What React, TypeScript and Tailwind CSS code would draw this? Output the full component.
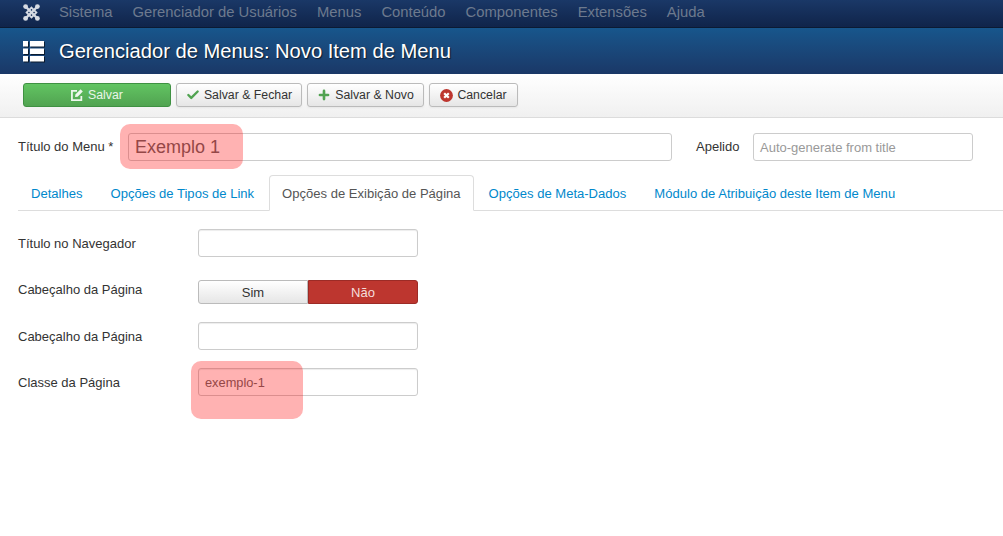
import { Check, Plus } from "lucide-react"

const font = "font-['Liberation_Sans',Arial,sans-serif]"

const navItems = ["Sistema", "Gerenciador de Usuários", "Menus", "Conteúdo", "Componentes", "Extensões", "Ajuda"]

const tabs = [
  { label: "Detalhes" },
  { label: "Opções de Tipos de Link" },
  { label: "Opções de Exibição de Página", active: true },
  { label: "Opções de Meta-Dados" },
  { label: "Módulo de Atribuição deste Item de Menu" },
]

function JoomlaLogo() {
  return (
    <svg width="17" height="17" viewBox="0 0 17 17" fill="none" className="ml-[23px] mr-[19px]">
      <g stroke="#d5dae2" strokeWidth="2.4">
        <path d="M2.5 2.5 L14.5 14.5" />
        <path d="M14.5 2.5 L2.5 14.5" />
        <path d="M8.5 3.6 L13.4 8.5 L8.5 13.4 L3.6 8.5 Z" strokeWidth="1.8" />
      </g>
      <circle cx="2.6" cy="2.6" r="2.4" fill="#d5dae2" />
      <circle cx="14.4" cy="2.6" r="2.4" fill="#d5dae2" />
      <circle cx="2.6" cy="14.4" r="2.4" fill="#d5dae2" />
      <circle cx="14.4" cy="14.4" r="2.4" fill="#d5dae2" />
    </svg>
  )
}

function ListIcon() {
  return (
    <svg width="21" height="21" viewBox="0 0 21 21" fill="#fff" className="drop-shadow-[1px_1px_0_rgba(0,0,0,0.6)]">
      <rect x="0" y="0" width="5" height="5.5" />
      <rect x="7" y="0" width="14" height="5.5" />
      <rect x="0" y="7.5" width="5" height="5.5" />
      <rect x="7" y="7.5" width="14" height="5.5" />
      <rect x="0" y="15" width="5" height="5.5" />
      <rect x="7" y="15" width="14" height="5.5" />
    </svg>
  )
}

function EditIcon() {
  return (
    <svg width="12" height="12" viewBox="0 0 13 13" fill="none" stroke="#eef8ee" strokeWidth="1.9">
      <path d="M11.2 7.5 V12 H1 V2 H6.5" />
      <path d="M4.4 8.8 L4.8 6 L10.4 0.4 L12.8 2.8 L7.2 8.4 Z" fill="#eef8ee" stroke="none" />
    </svg>
  )
}

function CancelIcon() {
  return (
    <svg width="13" height="13" viewBox="0 0 13 13">
      <circle cx="6.5" cy="6.5" r="6.4" fill="#bd362f" />
      <path d="M4.2 4.2 L8.8 8.8 M8.8 4.2 L4.2 8.8" stroke="#fff" strokeWidth="2.2" />
    </svg>
  )
}

function ToolbarButton({ children, className }: { children: React.ReactNode; className: string }) {
  return (
    <button className={`flex h-6 items-center justify-center gap-1 rounded-[3px] border border-[#bbb] bg-gradient-to-b from-white to-[#e6e6e6] text-[12.3px] text-[#333] shadow-[0_1px_2px_rgba(0,0,0,0.05)] ${className}`}>
      {children}
    </button>
  )
}

function Field({ label, className, children }: { label: string; className: string; children: React.ReactNode }) {
  return (
    <div className={`flex items-start ${className}`}>
      <label className="w-[180px] text-[13px] leading-[18px] text-[#333]">{label}</label>
      {children}
    </div>
  )
}

function TextBox({ value }: { value?: string }) {
  return (
    <div className="flex h-7 w-[220px] items-center rounded-[3px] border border-[#ccc] bg-white px-[6px] pt-[2px] text-[12.8px] text-[#666] shadow-[inset_0_1px_1px_rgba(0,0,0,0.075)]">
      {value}
    </div>
  )
}

export default function App() {
  return (
    <div className={`relative h-[536px] w-[1003px] overflow-hidden bg-white ${font}`}>
      {/* Top nav */}
      <div className="flex h-7 items-center border-b border-[#0b1a33] bg-gradient-to-b from-[#1a3867] to-[#10244a] pb-[3px]">
        <JoomlaLogo />
        <div className="flex gap-5 text-[14.8px] text-[#6d7a8e]">
          {navItems.map((item) => (
            <span key={item}>{item}</span>
          ))}
        </div>
      </div>

      {/* Title bar */}
      <div className="flex h-[46px] items-center gap-[15px] bg-gradient-to-b from-[#17568c] to-[#1a3867] pl-[23px]">
        <ListIcon />
        <h1 className="text-[20.15px] leading-none text-white [text-shadow:1px_1px_1px_rgba(0,0,0,0.6)]">
          Gerenciador de Menus: Novo Item de Menu
        </h1>
      </div>

      {/* Toolbar */}
      <div className="flex h-[44px] items-start gap-[5px] border-b border-[#dcdcdc] bg-gradient-to-b from-white to-[#f0f0f0] pl-[23px] pt-[9px]">
        <button className="flex h-6 w-[148px] items-center justify-center gap-[5px] rounded-[3px] border border-[#3f9142] bg-gradient-to-b from-[#62c462] to-[#51a351] text-[12.3px] text-[#e8f5e8]">
          <EditIcon />
          Salvar
        </button>
        <ToolbarButton className="w-[126px]">
          <Check size={14} strokeWidth={4} color="#51a351" />
          Salvar &amp; Fechar
        </ToolbarButton>
        <ToolbarButton className="w-[117px]">
          <Plus size={14} strokeWidth={4.5} color="#51a351" />
          Salvar &amp; Novo
        </ToolbarButton>
        <ToolbarButton className="w-[89px]">
          <CancelIcon />
          Cancelar
        </ToolbarButton>
      </div>

      {/* Title row */}
      <div className="mt-[15px] flex items-center pl-[18px]">
        <label className="w-[110px] text-[13px] text-[#333]">Título do Menu *</label>
        <div className="flex h-7 w-[544px] items-center rounded-[3px] border border-[#ccc] bg-white px-[6px] text-lg text-[#666]">
          Exemplo 1
        </div>
        <label className="ml-6 w-[57px] text-[13px] text-[#333]">Apelido</label>
        <div className="flex h-7 w-[220px] items-center rounded-[3px] border border-[#ccc] bg-white px-[6px] pt-[2px] text-[13px] text-[#999]">
          Auto-generate from title
        </div>
      </div>

      {/* Tabs */}
      <div className="ml-[18px] mt-[14px] flex h-9 gap-[2px] border-b border-[#ddd] text-[13.05px]">
        {tabs.map((tab) => (
          <div
            key={tab.label}
            className={`flex h-9 items-center pt-[2px] ${
              tab.active
                ? "rounded-t-[4px] border border-[#ddd] border-b-white bg-white px-[12px] text-[#555]"
                : "px-[13px] text-[#0088cc]"
            }`}
          >
            {tab.label}
          </div>
        ))}
      </div>

      {/* Form */}
      <div className="pl-[18px] pt-[18px]">
        <Field label="Título no Navegador" className="h-[51px] pt-[6px]">
          <div className="-mt-[6px]"><TextBox /></div>
        </Field>
        <Field label="Cabeçalho da Página" className="h-[42px] pt-[1px]">
          <div className="-mt-[1px] flex h-6 w-[220px] text-[13px]">
            <div className="flex w-[110px] items-center justify-center rounded-l-[3px] border border-[#bbb] bg-gradient-to-b from-white to-[#e6e6e6] pt-[2px] text-[#333]">
              Sim
            </div>
            <div className="flex w-[110px] items-center justify-center rounded-r-[3px] border border-[#9c2b26] bg-[#bd362f] pt-[2px] text-[#f5dddc]">
              Não
            </div>
          </div>
        </Field>
        <Field label="Cabeçalho da Página" className="h-[46px] pt-[6px]">
          <div className="-mt-[6px]"><TextBox /></div>
        </Field>
        <Field label="Classe da Página" className="h-[46px] pt-[6px]">
          <div className="-mt-[6px]"><TextBox value="exemplo-1" /></div>
        </Field>
      </div>

      {/* Highlight overlays */}
      <div className="absolute left-[120px] top-[124px] h-[45px] w-[123px] rounded-[10px] bg-[#ff0000]/30" />
      <div className="absolute left-[191px] top-[361px] h-[58px] w-[112px] rounded-[10px] bg-[#ff0000]/30" />
    </div>
  )
}
